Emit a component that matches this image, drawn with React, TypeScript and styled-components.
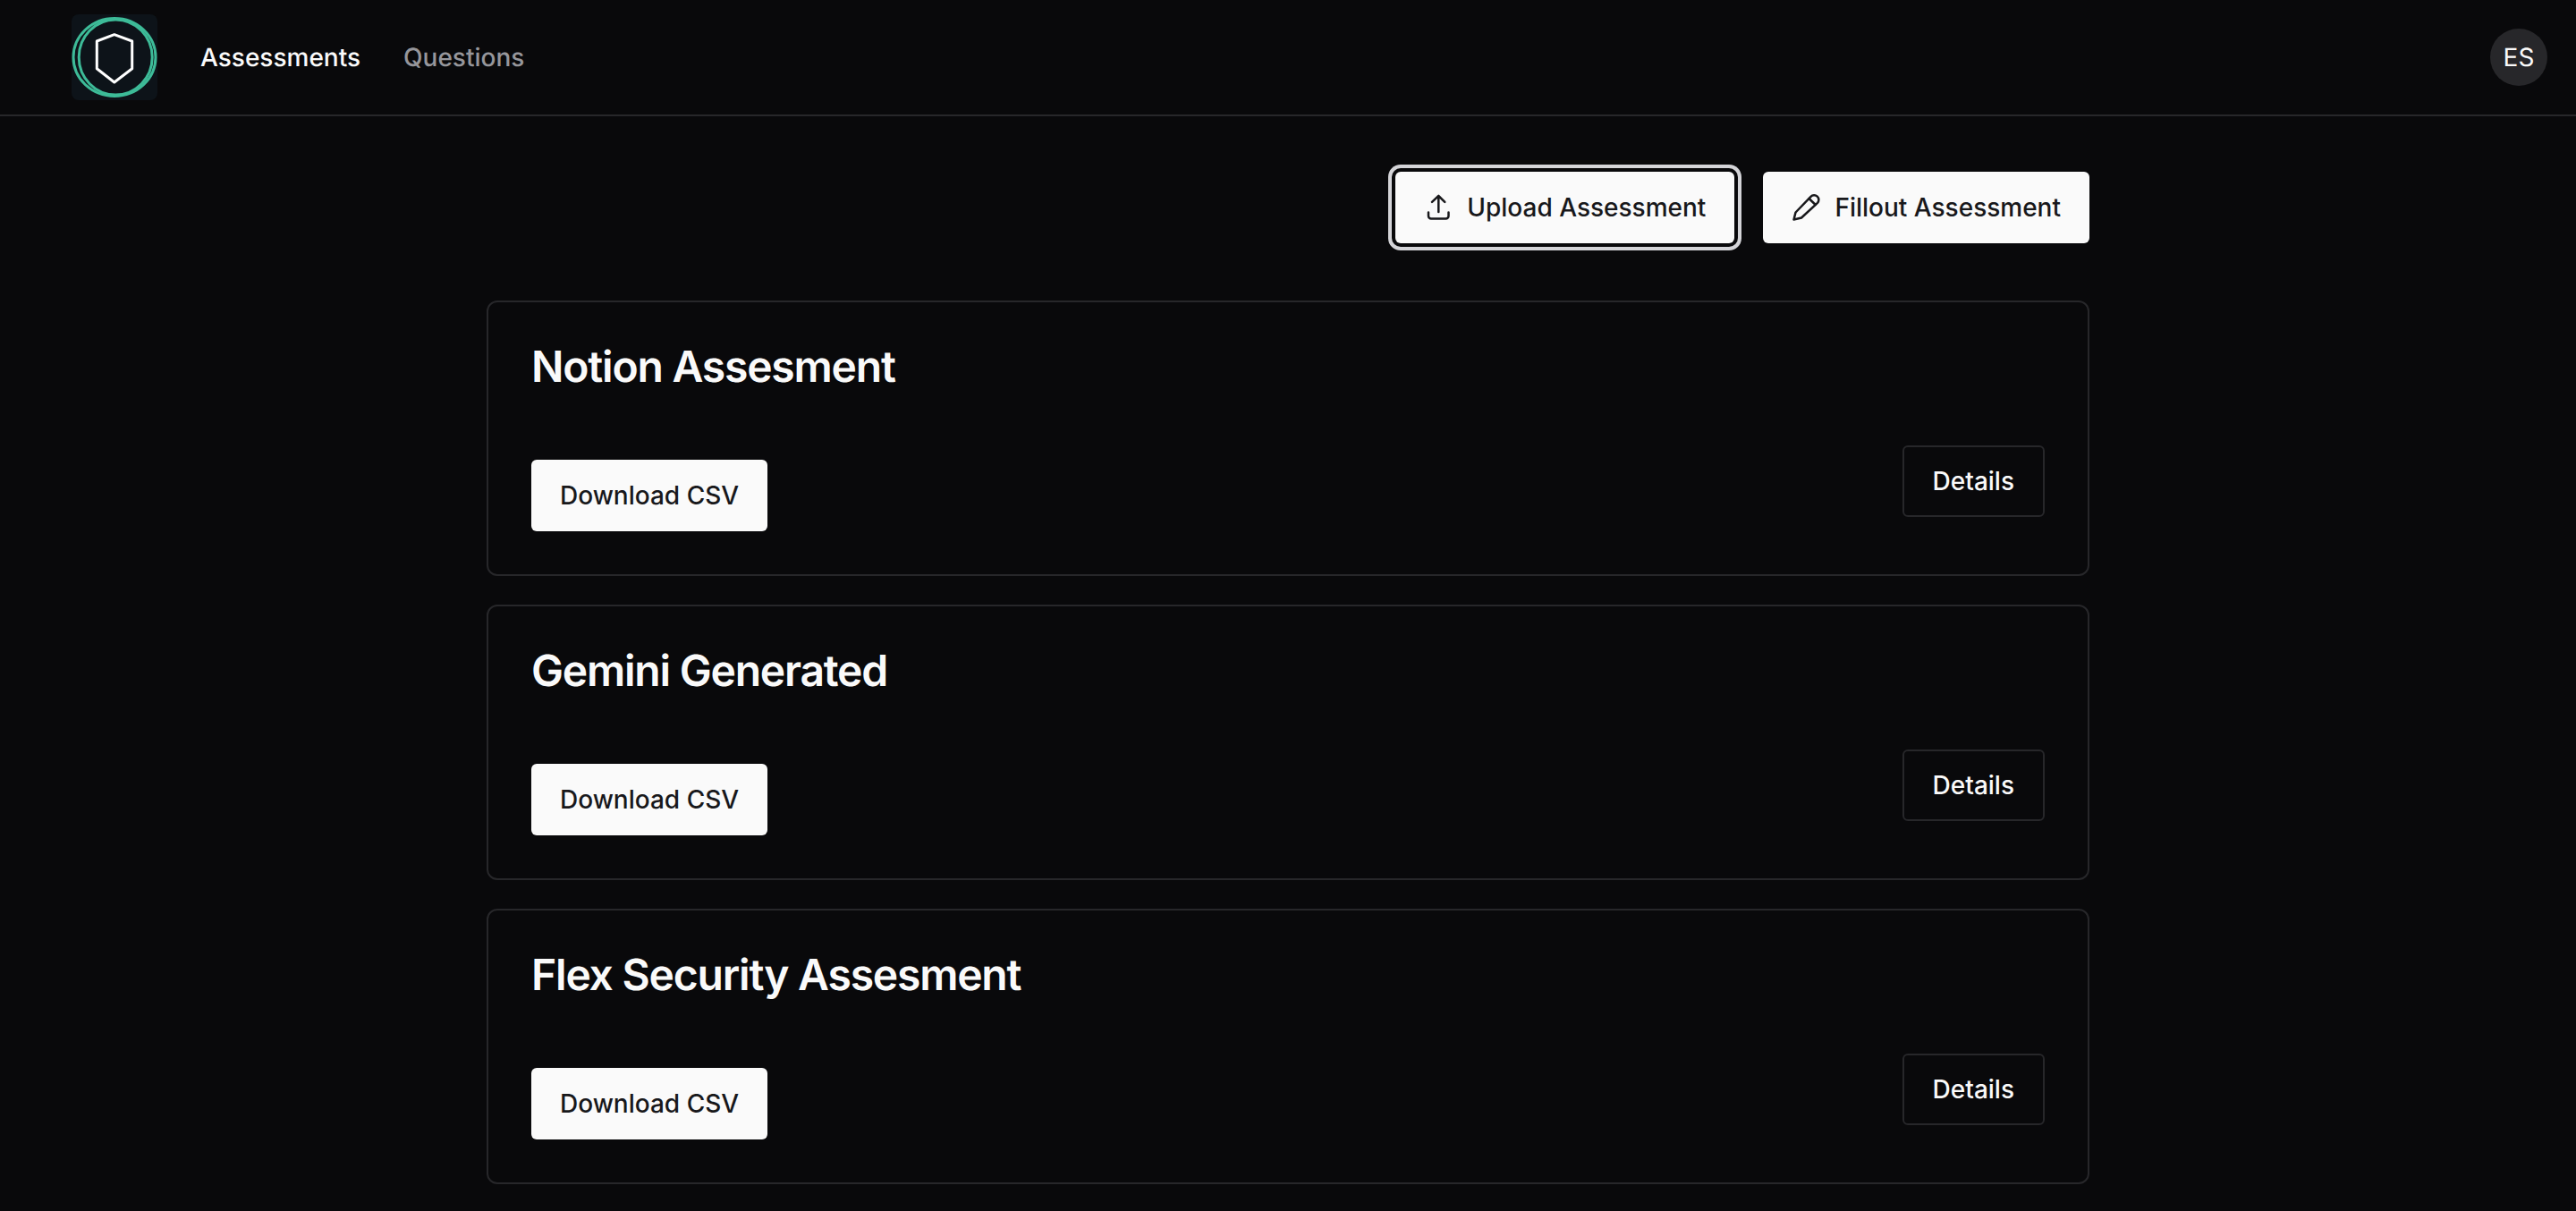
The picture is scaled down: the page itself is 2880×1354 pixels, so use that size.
import React from 'react';
import styled, { createGlobalStyle } from 'styled-components';

const GlobalStyle = createGlobalStyle`
  html, body {
    margin: 0;
    background: #09090b;
    color: #fafafa;
    font-family: Inter, "Liberation Sans", sans-serif;
    font-feature-settings: "rlig" 1, "calt" 1;
    text-rendering: geometricPrecision;
  }
  * { box-sizing: border-box; }
`;

const Page = styled.div`
  min-height: 100vh;
`;

const Header = styled.header`
  display: flex;
  align-items: center;
  justify-content: space-between;
  height: 130px;
  padding: 0 32px 0 80px;
  border-bottom: 2px solid #27272a;
`;

const Nav = styled.nav`
  display: flex;
  align-items: center;
`;

const LogoBox = styled.svg`
  display: block;
  width: 96px;
  height: 96px;
  margin-right: 48px;
`;

const NavLink = styled.a<{ $active?: boolean }>`
  font-size: 28px;
  line-height: 40px;
  font-weight: 450;
  margin-right: 48px;
  color: ${(p) => (p.$active ? '#fafafa' : '#96969b')};
`;

const Avatar = styled.div`
  display: flex;
  align-items: center;
  justify-content: center;
  width: 64px;
  height: 64px;
  border-radius: 50%;
  background: #27272a;
  font-size: 28px;
  color: #fafafa;
`;

const Main = styled.main`
  width: 1792px;
  margin: 0 auto;
  padding-top: 62px;
`;

const Toolbar = styled.div`
  display: flex;
  justify-content: flex-end;
  gap: 32px;
  margin-bottom: 64px;
`;

const Button = styled.button<{ $focused?: boolean }>`
  display: inline-flex;
  align-items: center;
  justify-content: center;
  height: 80px;
  padding: 0 32px;
  border: 0;
  border-radius: 6px;
  background: #fafafa;
  color: #18181b;
  font-family: inherit;
  font-size: 28px;
  font-weight: 450;
  box-shadow: ${(p) => (p.$focused ? '0 0 0 4px #09090b, 0 0 0 8px #d4d4d8' : 'none')};
`;

const OutlineButton = styled(Button)`
  background: #09090b;
  color: #fafafa;
  border: 2px solid #27272a;
  margin-bottom: 16px;
`;

const ButtonIcon = styled.svg`
  width: 32px;
  height: 32px;
  margin-right: 16px;
  fill: none;
  stroke: #18181b;
  stroke-width: 2.5;
  stroke-linecap: round;
  stroke-linejoin: round;
`;

const CardList = styled.div`
  display: flex;
  flex-direction: column;
  gap: 32px;
`;

const Card = styled.section`
  display: flex;
  align-items: flex-end;
  justify-content: space-between;
  padding: 48px;
  border: 2px solid #27272a;
  border-radius: 12px;
  background: #09090b;
`;

const CardBody = styled.div`
  display: flex;
  flex-direction: column;
  align-items: flex-start;
  gap: 80px;
`;

const CardTitle = styled.h3`
  margin: 0;
  font-size: 48px;
  line-height: 48px;
  font-weight: 600;
  letter-spacing: -0.025em;
  color: #fafafa;
`;

const assessments = ['Notion Assesment', 'Gemini Generated', 'Flex Security Assesment'];

const Logo = () => (
  <LogoBox viewBox="0 0 96 96">
    <rect width="96" height="96" rx="8" fill="#0d1319" />
    <g fill="none" stroke="#3dbb98" strokeWidth="3">
      <ellipse cx="48" cy="48" rx="46" ry="43.5" />
      <ellipse cx="49.2" cy="48" rx="41" ry="42" />
    </g>
    <path
      d="M47.8 22.7 L67.7 30 V 60.7 L47.8 76 L28.3 60.7 V 30 Z"
      fill="none"
      stroke="#fff"
      strokeWidth="3"
      strokeLinejoin="round"
    />
  </LogoBox>
);

const UploadIcon = () => (
  <ButtonIcon viewBox="12 11 32 32">
    <path d="M28.3 14 V32 M21 20.8 L28.3 14 L35.3 20.8" />
    <path d="M17 32.5 V36.5 A3 3 0 0 0 20 39.5 H36.5 A3 3 0 0 0 39.5 36.5 V32.5" />
  </ButtonIcon>
);

const PencilIcon = () => (
  <ButtonIcon viewBox="13 11 32 32">
    <path d="M15.5 40.5 L17.5 32.5 L34.5 14.8 A5 5 0 0 1 42 21.8 L24 38.5 Z" />
    <path d="M32.5 17 L39.8 24" />
  </ButtonIcon>
);

export default function App() {
  return (
    <Page>
      <GlobalStyle />
      <Header>
        <Nav>
          <Logo />
          <NavLink $active>Assessments</NavLink>
          <NavLink>Questions</NavLink>
        </Nav>
        <Avatar>ES</Avatar>
      </Header>
      <Main>
        <Toolbar>
          <Button $focused>
            <UploadIcon />
            Upload Assessment
          </Button>
          <Button>
            <PencilIcon />
            Fillout Assessment
          </Button>
        </Toolbar>
        <CardList>
          {assessments.map((name) => (
            <Card key={name}>
              <CardBody>
                <CardTitle>{name}</CardTitle>
                <Button>Download CSV</Button>
              </CardBody>
              <OutlineButton>Details</OutlineButton>
            </Card>
          ))}
        </CardList>
      </Main>
    </Page>
  );
}
